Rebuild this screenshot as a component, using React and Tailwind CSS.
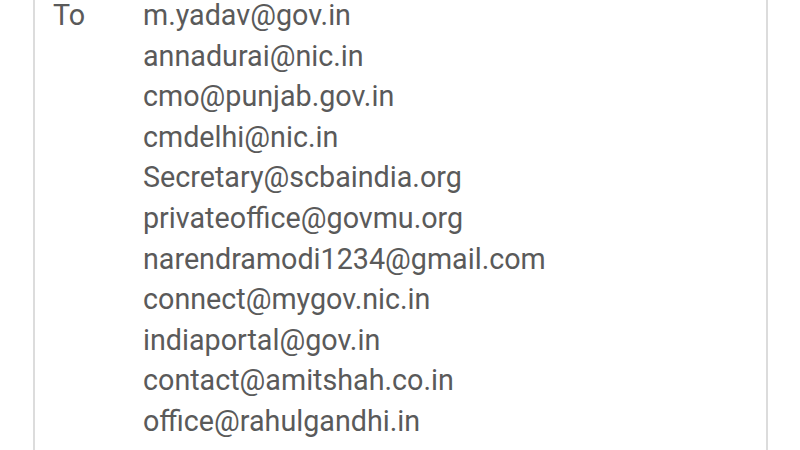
const recipients = [
  "m.yadav@gov.in",
  "annadurai@nic.in",
  "cmo@punjab.gov.in",
  "cmdelhi@nic.in",
  "Secretary@scbaindia.org",
  "privateoffice@govmu.org",
  "narendramodi1234@gmail.com",
  "connect@mygov.nic.in",
  "indiaportal@gov.in",
  "contact@amitshah.co.in",
  "office@rahulgandhi.in",
  "pmo@gov.in",
];

export default function App() {
  return (
    <div className="w-[800px] h-[450px] overflow-hidden bg-white font-['Roboto',sans-serif]">
      <div className="ml-[33px] w-[735px] h-[470px] border-x-[2px] border-[#dcdcdc] bg-white">
        <div className="flex -mt-[5px] pl-[18px] text-[28.7px] leading-[40.6px] text-[#5a5a5a]">
          <div className="w-[90px] shrink-0">To</div>
          <div className="flex flex-col">
            {recipients.map((r) => (
              <div key={r}>{r}</div>
            ))}
          </div>
        </div>
      </div>
    </div>
  );
}
